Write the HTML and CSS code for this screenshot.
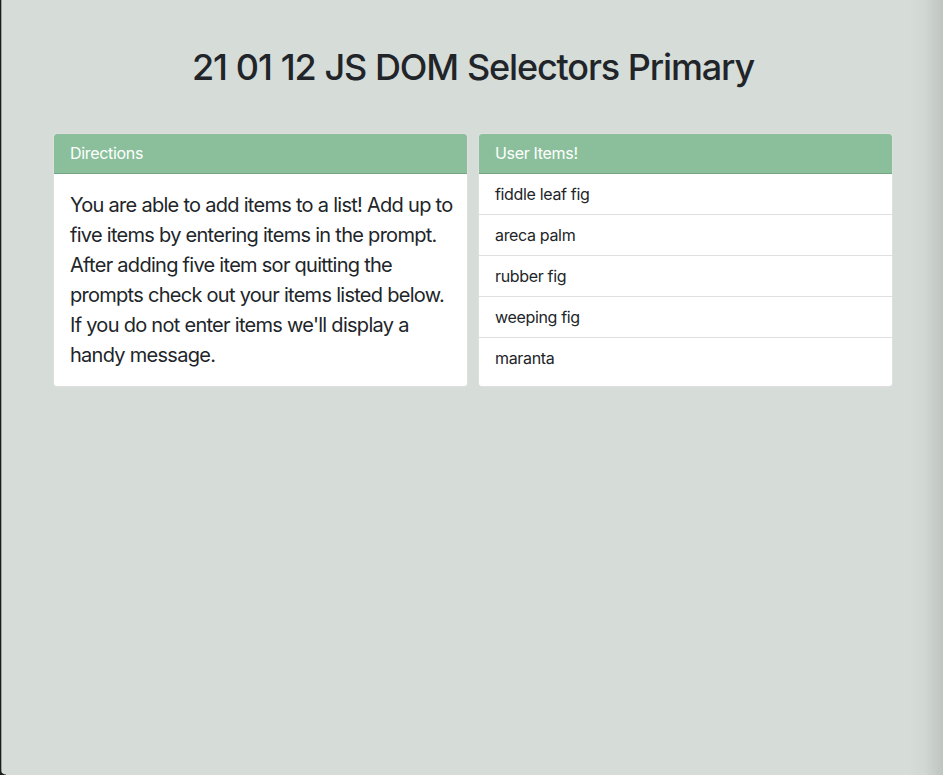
FILE: index.html
```html
<!DOCTYPE html>
<html lang="en">
<head>
<meta charset="utf-8">
<title>21 01 12 JS DOM Selectors Primary</title>
<link rel="stylesheet" href="styles.css">
</head>
<body>
<div class="page">
  <h1 class="title">21 01 12 JS DOM Selectors Primary</h1>
  <div class="row">
    <section class="card">
      <div class="card-header">Directions</div>
      <div class="card-body">
        <p class="lead">You are able to add items to a list! Add up to<br>five items by entering items in the prompt.<br>After adding five item sor quitting the<br>prompts check out your items listed below.<br>If you do not enter items we'll display a<br>handy message.</p>
      </div>
    </section>
    <section class="card">
      <div class="card-header">User Items!</div>
      <ul class="list-group">
        <li class="list-item">fiddle leaf fig</li>
        <li class="list-item">areca palm</li>
        <li class="list-item">rubber fig</li>
        <li class="list-item">weeping fig</li>
        <li class="list-item">maranta</li>
      </ul>
    </section>
  </div>
  <div class="edge-left"></div>
  <div class="edge-right"></div>
  <div class="corner-left"></div>
</div>
</body>
</html>
```

FILE: styles.css
```css
* { box-sizing: border-box; }
html, body { margin: 0; padding: 0; }
body {
  font-family: Inter, "Noto Sans", "Liberation Sans", sans-serif;
  color: #212529;
  background: #d6dcd8;
}
.page {
  position: relative;
  min-height: 775px;
  padding: 46px 50px 0 53px;
  overflow: hidden;
}
.title {
  margin: 0 0 44px;
  text-align: center;
  font-size: 36px;
  font-weight: 500;
  line-height: 43px;
  letter-spacing: -0.032em;
  word-spacing: 0.5px;
  color: #212529;
}
.row {
  display: flex;
  gap: 10px;
}
.card {
  flex: 1 1 0;
  background: #fff;
  border: 1px solid rgba(0,0,0,0.125);
  border-radius: 4px;
  overflow: hidden;
  display: flex;
  flex-direction: column;
}
.card-header {
  background: #8bbf9b;
  color: #fff;
  font-size: 16px;
  line-height: 24px;
  letter-spacing: -0.02em;
  padding: 7px 16px 8px;
  border-bottom: 1px solid #74a683;
}
.card-body { padding: 16px; }
.lead {
  margin: 0;
  font-size: 20px;
  line-height: 30px;
  font-weight: 400;
  letter-spacing: -0.036em;
  white-space: nowrap;
}
.list-group {
  list-style: none;
  margin: 0;
  padding: 0;
}
.list-item {
  font-size: 16px;
  line-height: 24px;
  letter-spacing: -0.021em;
  padding: 8px 16px;
  border-bottom: 1px solid rgba(0,0,0,0.125);
}
.list-item:last-child { border-bottom: none; }
.edge-left {
  position: absolute;
  left: 0; top: 0; bottom: 0;
  width: 2px;
  background: linear-gradient(to right, #1b1d1c 0 1px, #9aa09c 1px);
}
.edge-right {
  position: absolute;
  right: 0; top: 0; bottom: 0;
  width: 34px;
  background: linear-gradient(to right, rgba(150,158,154,0) 0%, rgba(150,158,154,0.08) 45%, rgba(150,158,154,0.38) 100%);
}
.corner-left {
  position: absolute;
  left: 0; bottom: 0;
  width: 6px;
  height: 6px;
  background: radial-gradient(circle at 100% 0, transparent 5px, #1b1d1c 6px);
}
```
